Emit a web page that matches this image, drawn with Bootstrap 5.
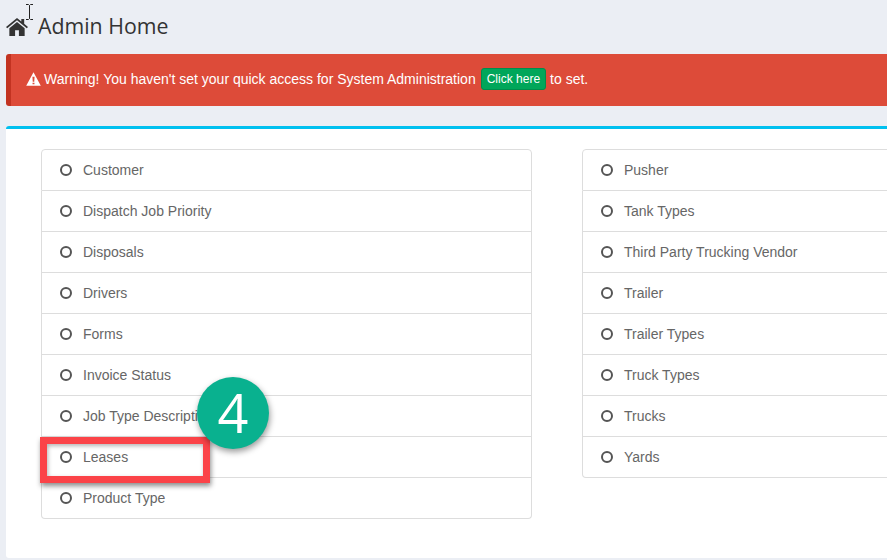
<!DOCTYPE html>
<html lang="en">
<head>
<meta charset="utf-8">
<title>Admin Home</title>
<link href="https://cdn.jsdelivr.net/npm/bootstrap@5.3.0/dist/css/bootstrap.min.css" rel="stylesheet">
<style>
html,body{height:560px;overflow:hidden}
body{background:#ebeef4;font-family:"Liberation Sans",Arial,sans-serif;font-size:14px;color:#555;position:relative;width:887px}
.shell{padding:0 0 0 6px;width:887px}
.head-row{height:54px;padding:0 0 2px;color:#333;gap:10px}
.head-row h1{font-family:"Open Sans",sans-serif;font-size:21.3px;line-height:30px;margin:0;font-weight:400;color:#333}
.warn-box{height:52px;background:#dd4b39;border-left:5px solid #c23321;border-radius:3px 0 0 3px;color:#fff;padding:0 0 2px 15px;font-size:14px}
.warn-box svg{margin-right:3px}
.go-btn{background:#00a65a;border:1px solid #008d4c;color:#fff;font-size:12px;line-height:18px;padding:1px 5px;border-radius:3px;margin:0 4px 0 5px;font-weight:400}
.go-btn:hover{background:#00a65a;color:#fff;border-color:#008d4c}
.main-box{margin-top:20px;height:432px;background:#fff;border-top:3px solid #00c0ef;border-radius:3px 0 0 3px;padding:20px 0 0 35px;gap:50px;overflow:hidden}
.opt-col{width:491px;flex:none}
.opt-list{--bs-list-group-border-color:#ddd;--bs-list-group-border-radius:4px}
.opt-list .list-group-item{height:41px;padding:0 0 0 18px;font-size:14px;color:#666;display:flex;align-items:center;gap:11px}
.opt-list .list-group-item:first-child{height:42px}
.ring{width:12px;height:12px;border:2px solid #555;border-radius:50%;flex:none}
.red-mark{position:absolute;left:40px;top:437px;width:170px;height:46px;border:7px solid #fb4348;box-shadow:1px 3px 5px rgba(0,0,0,.45),inset 1px 2px 4px rgba(0,0,0,.3)}
.num-mark{position:absolute;left:197px;top:377px;width:72px;height:72px;border-radius:50%;background:#09b18f;color:#fff;font-size:54px;line-height:70px;font-family:"Open Sans",sans-serif;text-align:center;box-shadow:1px 3px 6px rgba(0,0,0,.4)}
.cursor-i{position:absolute;left:25px;top:4px}
</style>
</head>
<body>
<div class="shell">
  <div class="head-row d-flex align-items-center">
    <svg width="22" height="19" viewBox="0 0 23 20" aria-hidden="true" preserveAspectRatio="none"><path fill="#333" d="M11.500 1 0 10.400l1.300 1.500L11.500 3.500l10.200 8.400 1.300-1.500-4-3.300V2h-3v2.700z"/><path fill="#333" d="M11.500 5.300 3.500 11.900V20h6v-6h4v6h6v-8.100z"/></svg>
    <h1>Admin Home</h1>
  </div>
  <div class="warn-box d-flex align-items-center">
    <svg width="15" height="14" viewBox="0 0 14 13" aria-hidden="true"><path fill="#fff" fill-rule="evenodd" d="M7 .3 13.800 12.700H.2zM6 4.500l.3 4.500h1.400L8 4.500zM6.100 10v1.500h1.800V10z"/></svg>
    <span>Warning! You haven't set your quick access for System Administration</span>
    <a href="#" class="btn go-btn">Click here</a>
    <span>to set.</span>
  </div>
  <div class="main-box d-flex align-items-start">
    <div class="opt-col">
      <ul class="list-group opt-list">
        <li class="list-group-item"><span class="ring"></span>Customer</li>
        <li class="list-group-item"><span class="ring"></span>Dispatch Job Priority</li>
        <li class="list-group-item"><span class="ring"></span>Disposals</li>
        <li class="list-group-item"><span class="ring"></span>Drivers</li>
        <li class="list-group-item"><span class="ring"></span>Forms</li>
        <li class="list-group-item"><span class="ring"></span>Invoice Status</li>
        <li class="list-group-item"><span class="ring"></span>Job Type Description</li>
        <li class="list-group-item"><span class="ring"></span>Leases</li>
        <li class="list-group-item"><span class="ring"></span>Product Type</li>
      </ul>
    </div>
    <div class="opt-col">
      <ul class="list-group opt-list">
        <li class="list-group-item"><span class="ring"></span>Pusher</li>
        <li class="list-group-item"><span class="ring"></span>Tank Types</li>
        <li class="list-group-item"><span class="ring"></span>Third Party Trucking Vendor</li>
        <li class="list-group-item"><span class="ring"></span>Trailer</li>
        <li class="list-group-item"><span class="ring"></span>Trailer Types</li>
        <li class="list-group-item"><span class="ring"></span>Truck Types</li>
        <li class="list-group-item"><span class="ring"></span>Trucks</li>
        <li class="list-group-item"><span class="ring"></span>Yards</li>
      </ul>
    </div>
  </div>
</div>
<div class="red-mark"></div>
<div class="num-mark">4</div>
<svg class="cursor-i" width="9" height="16" viewBox="0 0 9 16" aria-hidden="true"><path fill="none" stroke="#222" d="M1 .5h2.500l1 1 1-1H8M4.500 1.500v13M1 15.500h2.500l1-1 1 1H8"/></svg>
</body>
</html>
